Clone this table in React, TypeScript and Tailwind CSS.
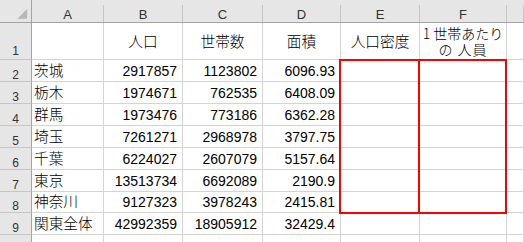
import React from 'react';

const jp = "font-['Noto_Sans_CJK_JP',sans-serif] font-light";
const num = "font-['Liberation_Sans',Arial,sans-serif]";

// column widths include the 1px gridline on the right edge
const colW = ['w-[72px]', 'w-[79px]', 'w-[80px]', 'w-[78px]', 'w-[79px]', 'w-[87px]', 'flex-1'];
const letters = ['A', 'B', 'C', 'D', 'E', 'F', ''];

const rows: { n: number; h: string; name: string; pop: string; hh: string; area: string }[] = [
  { n: 2, h: 'h-[22px]', name: '茨城', pop: '2917857', hh: '1123802', area: '6096.93' },
  { n: 3, h: 'h-[22px]', name: '栃木', pop: '1974671', hh: '762535', area: '6408.09' },
  { n: 4, h: 'h-[22px]', name: '群馬', pop: '1973476', hh: '773186', area: '6362.28' },
  { n: 5, h: 'h-[22px]', name: '埼玉', pop: '7261271', hh: '2968978', area: '3797.75' },
  { n: 6, h: 'h-[22px]', name: '千葉', pop: '6224027', hh: '2607079', area: '5157.64' },
  { n: 7, h: 'h-[22px]', name: '東京', pop: '13513734', hh: '6692089', area: '2190.9' },
  { n: 8, h: 'h-[21px]', name: '神奈川', pop: '9127323', hh: '3978243', area: '2415.81' },
  { n: 9, h: 'h-[22px]', name: '関東全体', pop: '42992359', hh: '18905912', area: '32429.4' },
  { n: 10, h: 'h-[22px]', name: '', pop: '', hh: '', area: '' },
];

function RowHead({ n, extra = '' }: { n: number; extra?: string }) {
  return (
    <div
      className={`w-[32px] shrink-0 bg-[#e6e6e6] border-r border-b border-r-[#a3a3a3] border-b-[#c6c6c6] flex items-end justify-center text-[12px] leading-none text-[#333] ${num} ${extra}`}
    >
      {n}
    </div>
  );
}

function Cell({ i, children, kind }: { i: number; children?: React.ReactNode; kind?: 'text' | 'num' }) {
  const align =
    kind === 'num'
      ? `justify-end pr-[5px] pb-[3px] text-[14px] ${num}`
      : `justify-start pl-[2px] pb-[3px] text-[14.67px] ${jp}`;
  return (
    <div
      className={`${colW[i]} shrink-0 border-r border-b border-[#d4d4d4] flex items-end leading-none text-black whitespace-nowrap ${align}`}
    >
      {children}
    </div>
  );
}

export default function App() {
  return (
    <div className="relative w-[524px] h-[242px] overflow-hidden bg-white select-none">
      {/* column letters */}
      <div className="flex h-[23px] bg-[#e6e6e6] border-b border-[#a3a3a3]">
        <div className="w-[32px] shrink-0 border-r border-[#a3a3a3] flex items-start justify-start">
          <svg width="32" height="22" viewBox="0 0 32 22" className="block">
            <polygon points="28,9 28,19 18,19" fill="#b7b7b7" />
          </svg>
        </div>
        {letters.map((l, i) => (
          <div key={i} className={`${colW[i]} shrink-0 flex flex-col`}>
            <div
              className={`mt-[5px] flex-1 border-r border-[#c6c6c6] flex justify-center pt-[3px] text-[13px] leading-[13px] text-[#333] ${num}`}
            >
              {l}
            </div>
          </div>
        ))}
      </div>

      {/* row 1: headings */}
      <div className="flex h-[37px]">
        <RowHead n={1} extra="pb-[2px]" />
        {[0, 1, 2, 3, 4, 5, 6].map((i) => (
          <div
            key={i}
            className={`${colW[i]} shrink-0 border-r border-b border-[#d4d4d4] flex flex-col items-center justify-center text-[14.67px] text-black whitespace-nowrap ${jp}`}
          >
            {i === 1 && <span className="leading-none">人口</span>}
            {i === 2 && <span className="leading-none">世帯数</span>}
            {i === 3 && <span className="leading-none">面積</span>}
            {i === 4 && <span className="leading-none">人口密度</span>}
            {i === 5 && (
              <>
                <div className="h-[16px] leading-[16px] text-[14px]">1 世帯あたり</div>
                <div className="h-[16px] leading-[16px] text-[14px] tracking-[1px]">の 人員</div>
              </>
            )}
          </div>
        ))}
      </div>

      {rows.map((r) => (
        <div key={r.n} className={`flex ${r.h}`}>
          <RowHead n={r.n} />
          <Cell i={0}>{r.name}</Cell>
          <Cell i={1} kind="num">{r.pop}</Cell>
          <Cell i={2} kind="num">{r.hh}</Cell>
          <Cell i={3} kind="num">{r.area}</Cell>
          <Cell i={4} kind="num" />
          <Cell i={5} kind="num" />
          <Cell i={6} kind="num" />
        </div>
      ))}

      {/* red outline around E2:F8 */}
      <div className="absolute left-[339px] top-[59px] w-[168px] h-[155px] border-2 border-[#ff0000] pointer-events-none" />
      <div className="absolute left-[418px] top-[59px] w-[2px] h-[155px] bg-[#ff0000] pointer-events-none" />
    </div>
  );
}
